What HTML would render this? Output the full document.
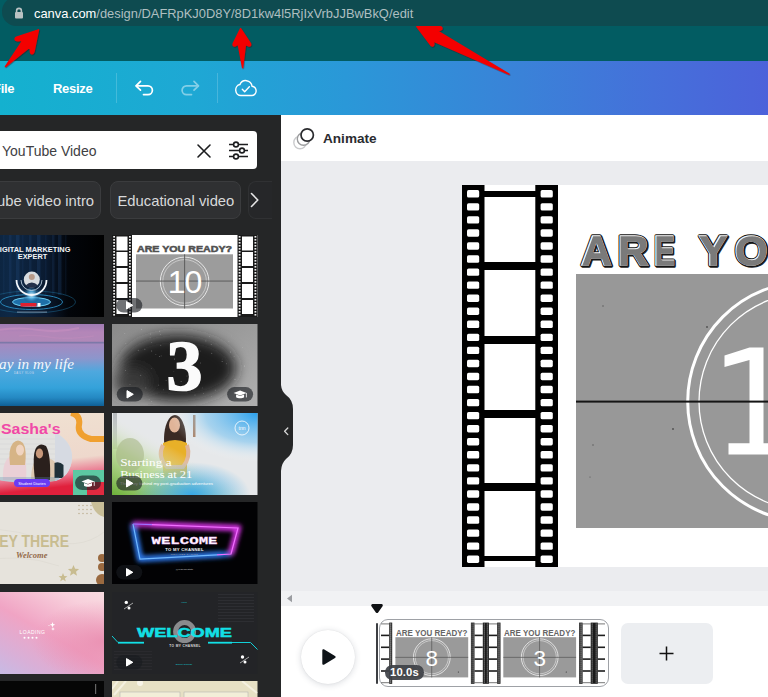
<!DOCTYPE html>
<html><head><meta charset="utf-8">
<style>
*{margin:0;padding:0;box-sizing:border-box}
html,body{width:768px;height:697px;overflow:hidden;background:#fff;font-family:"Liberation Sans",sans-serif}
.a{position:absolute}
#chrome{left:0;top:0;width:768px;height:61px;background:#025c62}
#pill{left:1.7px;top:-3px;width:800px;height:28.6px;border-radius:14.3px;background:#0e4b50}
#url{left:34px;top:5.8px;font-size:12.9px;color:#aebfc0;white-space:nowrap}
#url b{font-weight:normal;color:#fff}
#hdr{left:0;top:61px;width:768px;height:54px;background:linear-gradient(90deg,#14b1cf 0%,#1ea8d4 25%,#2a98d8 45%,#3a82d8 68%,#4570da 85%,#4c62da 100%)}
.hb{color:#fff;font-weight:bold;font-size:13px;letter-spacing:-0.3px;top:81px}
#left{left:0;top:115px;width:281px;height:582px;background:#252627}
#search{left:-10px;top:131px;width:267px;height:38px;background:#fff;border-radius:4px}
.chip{height:37.5px;top:181px;border-radius:8px;background:#2f3032;border:1px solid #3b3c3e;color:#d8d9da;font-size:14.8px;line-height:38px;white-space:nowrap;overflow:hidden}
.th{position:absolute;overflow:hidden;border-radius:2px}
#toolbar{left:281px;top:115px;width:487px;height:46px;background:#fff}
#canvasbg{left:281px;top:161px;width:487px;height:430px;background:#ebecef}
#page{left:462px;top:185px;width:320px;height:382px;background:#fff}
#tlbar{left:281px;top:591px;width:487px;height:15px;background:#f1f2f4}
#tl{left:281px;top:606px;width:487px;height:91px;background:#fff}
</style></head><body>
<div id="chrome" class="a"></div>
<div id="pill" class="a"></div>
<svg class="a" style="left:14px;top:7px" width="10" height="12" viewBox="0 0 10 12"><path d="M2.6 5.2V3.8a2.4 2.4 0 0 1 4.8 0V5.2" fill="none" stroke="#b9c2c3" stroke-width="1.6"/><rect x="1" y="5" width="8" height="6.5" rx="1" fill="#b9c2c3"/></svg>
<div id="url" class="a"><b>canva.com</b>/design/DAFRpKJ0D8Y/8D1kw4l5RjIxVrbJJBwBkQ/edit</div>
<div id="hdr" class="a"></div>
<div class="a hb" style="left:-7px">File</div>
<div class="a hb" style="left:53px">Resize</div>
<div class="a" style="left:116px;top:73px;width:1px;height:30px;background:rgba(255,255,255,.18)"></div>
<div class="a" style="left:217px;top:73px;width:1px;height:30px;background:rgba(255,255,255,.18)"></div>
<svg class="a" style="left:130px;top:75px" width="30" height="26" viewBox="0 0 30 26"><path d="M6.5 10.8H18a4.4 4.4 0 0 1 0 8.8h-4.5" fill="none" stroke="#fff" stroke-width="1.7" stroke-linecap="round"/><path d="M10.5 6.4 6 10.8l4.5 4.4" fill="none" stroke="#fff" stroke-width="1.7" stroke-linecap="round" stroke-linejoin="round"/></svg>
<svg class="a" style="left:175px;top:75px" width="30" height="26" viewBox="0 0 30 26" opacity=".45"><path d="M23 10.8H11.5a4.4 4.4 0 0 0 0 8.8h5" fill="none" stroke="#fff" stroke-width="1.7" stroke-linecap="round"/><path d="M19 6.4l4.5 4.4-4.5 4.4" fill="none" stroke="#fff" stroke-width="1.7" stroke-linecap="round" stroke-linejoin="round"/></svg>
<svg class="a" style="left:233px;top:76px" width="26" height="24" viewBox="0 0 28 24" preserveAspectRatio="none"><path d="M8.5 19.5h11.5a4.6 4.6 0 0 0 .6-9.2A7 7 0 0 0 7.4 8.6 5.5 5.5 0 0 0 8.5 19.5z" fill="none" stroke="#fff" stroke-width="1.5" stroke-linejoin="round"/><path d="M10 13.2l2.6 2.6 5-5" fill="none" stroke="#fff" stroke-width="1.5" stroke-linecap="round" stroke-linejoin="round"/></svg>
<div id="left" class="a"></div>
<!--TH-->
<svg class="a" style="left:-41.5px;top:234.7px" width="145.5" height="82" viewBox="0 0 145.5 82"><defs><linearGradient id="dm" x1="0" y1="0" x2="1" y2="0"><stop offset="0" stop-color="#081a2e"/><stop offset=".35" stop-color="#0e2846"/><stop offset=".6" stop-color="#0a1a30"/><stop offset=".75" stop-color="#02050a"/><stop offset="1" stop-color="#000"/></linearGradient><radialGradient id="dmg" cx=".5" cy=".5" r=".5"><stop offset="0" stop-color="#dff4ff"/><stop offset=".4" stop-color="#5ab6e8" stop-opacity=".8"/><stop offset="1" stop-color="#0a3a6a" stop-opacity="0"/></radialGradient></defs><rect width="145.5" height="82" fill="url(#dm)"/><rect x="44" y="0" width="1.5" height="60" fill="#2a5288" opacity="0.12"/><rect x="50" y="0" width="2.5" height="60" fill="#2a5288" opacity="0.18"/><rect x="57" y="0" width="3.5" height="60" fill="#2a5288" opacity="0.24"/><rect x="63" y="0" width="1.5" height="60" fill="#2a5288" opacity="0.12"/><rect x="70" y="0" width="2.5" height="60" fill="#2a5288" opacity="0.18"/><rect x="78" y="0" width="3.5" height="60" fill="#2a5288" opacity="0.24"/><rect x="86" y="0" width="1.5" height="60" fill="#2a5288" opacity="0.12"/><rect x="93" y="0" width="2.5" height="60" fill="#2a5288" opacity="0.18"/><rect x="99" y="0" width="3.5" height="60" fill="#2a5288" opacity="0.24"/><rect x="106" y="0" width="1.5" height="60" fill="#2a5288" opacity="0.12"/><ellipse cx="72.5" cy="67" rx="44" ry="11" fill="none" stroke="#1f6f9a" stroke-width=".7" opacity=".7"/><ellipse cx="72.5" cy="67" rx="31" ry="7.5" fill="none" stroke="#2a8fc4" stroke-width=".9"/><ellipse cx="72.5" cy="67" rx="19" ry="4.5" fill="#1e6fa8" stroke="#6ed0f4" stroke-width="1"/><ellipse cx="72.5" cy="60" rx="9" ry="9" fill="url(#dmg)"/><path d="M57.5 45a15 15 0 0 0 30 0" fill="none" stroke="#f2f6fa" stroke-width="1.8"/><path d="M62 45a10.5 10.5 0 0 0 21 0" fill="none" stroke="#c8dcec" stroke-width=".8"/><circle cx="72.8" cy="44.6" r="8" fill="#d8dce0"/><path d="M66.5 50.5q6.3-6 12.6 0q-2.6 2.2-6.3 2.2t-6.3-2.2z" fill="#23304a"/><circle cx="72.8" cy="42" r="3" fill="#b89a88"/><rect x="61.5" y="68" width="16" height="3.6" fill="#e02030"/><rect x="78.5" y="68" width="3" height="3.6" fill="#fff"/><text x="35.5" y="16.9" font-family="Liberation Sans" font-weight="bold" font-size="7.3" fill="#f4f6f8" textLength="76" lengthAdjust="spacingAndGlyphs">DIGITAL MARKETING</text><text x="58.8" y="24.1" font-family="Liberation Sans" font-weight="bold" font-size="7.3" fill="#f4f6f8" textLength="29.4" lengthAdjust="spacingAndGlyphs">EXPERT</text><rect x="58" y="76.5" width="30" height="1.2" fill="#8aa0b4" opacity=".7"/></svg>
<svg class="a" style="left:112.2px;top:234.7px" width="145.5" height="82" viewBox="0 0 145.5 82"><rect width="145.5" height="82" fill="#fff"/><rect x="0" y="0" width="20" height="82" fill="#1a1a1a"/><rect x="4.5" y="1.5" width="11" height="14" fill="#fff"/><rect x="4.5" y="17" width="11" height="14" fill="#fff"/><rect x="4.5" y="33" width="11" height="14" fill="#fff"/><rect x="4.5" y="49" width="11" height="14" fill="#fff"/><rect x="4.5" y="65" width="11" height="14" fill="#fff"/><rect x="1.2" y="1" width="1.8" height="1.6" fill="#eee"/><rect x="17" y="1" width="1.8" height="1.6" fill="#eee"/><rect x="1.2" y="4" width="1.8" height="1.6" fill="#eee"/><rect x="17" y="4" width="1.8" height="1.6" fill="#eee"/><rect x="1.2" y="7" width="1.8" height="1.6" fill="#eee"/><rect x="17" y="7" width="1.8" height="1.6" fill="#eee"/><rect x="1.2" y="10" width="1.8" height="1.6" fill="#eee"/><rect x="17" y="10" width="1.8" height="1.6" fill="#eee"/><rect x="1.2" y="13" width="1.8" height="1.6" fill="#eee"/><rect x="17" y="13" width="1.8" height="1.6" fill="#eee"/><rect x="1.2" y="16" width="1.8" height="1.6" fill="#eee"/><rect x="17" y="16" width="1.8" height="1.6" fill="#eee"/><rect x="1.2" y="19" width="1.8" height="1.6" fill="#eee"/><rect x="17" y="19" width="1.8" height="1.6" fill="#eee"/><rect x="1.2" y="22" width="1.8" height="1.6" fill="#eee"/><rect x="17" y="22" width="1.8" height="1.6" fill="#eee"/><rect x="1.2" y="25" width="1.8" height="1.6" fill="#eee"/><rect x="17" y="25" width="1.8" height="1.6" fill="#eee"/><rect x="1.2" y="28" width="1.8" height="1.6" fill="#eee"/><rect x="17" y="28" width="1.8" height="1.6" fill="#eee"/><rect x="1.2" y="31" width="1.8" height="1.6" fill="#eee"/><rect x="17" y="31" width="1.8" height="1.6" fill="#eee"/><rect x="1.2" y="34" width="1.8" height="1.6" fill="#eee"/><rect x="17" y="34" width="1.8" height="1.6" fill="#eee"/><rect x="1.2" y="37" width="1.8" height="1.6" fill="#eee"/><rect x="17" y="37" width="1.8" height="1.6" fill="#eee"/><rect x="1.2" y="40" width="1.8" height="1.6" fill="#eee"/><rect x="17" y="40" width="1.8" height="1.6" fill="#eee"/><rect x="1.2" y="43" width="1.8" height="1.6" fill="#eee"/><rect x="17" y="43" width="1.8" height="1.6" fill="#eee"/><rect x="1.2" y="46" width="1.8" height="1.6" fill="#eee"/><rect x="17" y="46" width="1.8" height="1.6" fill="#eee"/><rect x="1.2" y="49" width="1.8" height="1.6" fill="#eee"/><rect x="17" y="49" width="1.8" height="1.6" fill="#eee"/><rect x="1.2" y="52" width="1.8" height="1.6" fill="#eee"/><rect x="17" y="52" width="1.8" height="1.6" fill="#eee"/><rect x="1.2" y="55" width="1.8" height="1.6" fill="#eee"/><rect x="17" y="55" width="1.8" height="1.6" fill="#eee"/><rect x="1.2" y="58" width="1.8" height="1.6" fill="#eee"/><rect x="17" y="58" width="1.8" height="1.6" fill="#eee"/><rect x="1.2" y="61" width="1.8" height="1.6" fill="#eee"/><rect x="17" y="61" width="1.8" height="1.6" fill="#eee"/><rect x="1.2" y="64" width="1.8" height="1.6" fill="#eee"/><rect x="17" y="64" width="1.8" height="1.6" fill="#eee"/><rect x="1.2" y="67" width="1.8" height="1.6" fill="#eee"/><rect x="17" y="67" width="1.8" height="1.6" fill="#eee"/><rect x="1.2" y="70" width="1.8" height="1.6" fill="#eee"/><rect x="17" y="70" width="1.8" height="1.6" fill="#eee"/><rect x="1.2" y="73" width="1.8" height="1.6" fill="#eee"/><rect x="17" y="73" width="1.8" height="1.6" fill="#eee"/><rect x="1.2" y="76" width="1.8" height="1.6" fill="#eee"/><rect x="17" y="76" width="1.8" height="1.6" fill="#eee"/><rect x="1.2" y="79" width="1.8" height="1.6" fill="#eee"/><rect x="17" y="79" width="1.8" height="1.6" fill="#eee"/><rect x="125.5" y="0" width="20" height="82" fill="#1a1a1a"/><rect x="130.0" y="1.5" width="11" height="14" fill="#fff"/><rect x="130.0" y="17" width="11" height="14" fill="#fff"/><rect x="130.0" y="33" width="11" height="14" fill="#fff"/><rect x="130.0" y="49" width="11" height="14" fill="#fff"/><rect x="130.0" y="65" width="11" height="14" fill="#fff"/><rect x="126.7" y="1" width="1.8" height="1.6" fill="#eee"/><rect x="142.5" y="1" width="1.8" height="1.6" fill="#eee"/><rect x="126.7" y="4" width="1.8" height="1.6" fill="#eee"/><rect x="142.5" y="4" width="1.8" height="1.6" fill="#eee"/><rect x="126.7" y="7" width="1.8" height="1.6" fill="#eee"/><rect x="142.5" y="7" width="1.8" height="1.6" fill="#eee"/><rect x="126.7" y="10" width="1.8" height="1.6" fill="#eee"/><rect x="142.5" y="10" width="1.8" height="1.6" fill="#eee"/><rect x="126.7" y="13" width="1.8" height="1.6" fill="#eee"/><rect x="142.5" y="13" width="1.8" height="1.6" fill="#eee"/><rect x="126.7" y="16" width="1.8" height="1.6" fill="#eee"/><rect x="142.5" y="16" width="1.8" height="1.6" fill="#eee"/><rect x="126.7" y="19" width="1.8" height="1.6" fill="#eee"/><rect x="142.5" y="19" width="1.8" height="1.6" fill="#eee"/><rect x="126.7" y="22" width="1.8" height="1.6" fill="#eee"/><rect x="142.5" y="22" width="1.8" height="1.6" fill="#eee"/><rect x="126.7" y="25" width="1.8" height="1.6" fill="#eee"/><rect x="142.5" y="25" width="1.8" height="1.6" fill="#eee"/><rect x="126.7" y="28" width="1.8" height="1.6" fill="#eee"/><rect x="142.5" y="28" width="1.8" height="1.6" fill="#eee"/><rect x="126.7" y="31" width="1.8" height="1.6" fill="#eee"/><rect x="142.5" y="31" width="1.8" height="1.6" fill="#eee"/><rect x="126.7" y="34" width="1.8" height="1.6" fill="#eee"/><rect x="142.5" y="34" width="1.8" height="1.6" fill="#eee"/><rect x="126.7" y="37" width="1.8" height="1.6" fill="#eee"/><rect x="142.5" y="37" width="1.8" height="1.6" fill="#eee"/><rect x="126.7" y="40" width="1.8" height="1.6" fill="#eee"/><rect x="142.5" y="40" width="1.8" height="1.6" fill="#eee"/><rect x="126.7" y="43" width="1.8" height="1.6" fill="#eee"/><rect x="142.5" y="43" width="1.8" height="1.6" fill="#eee"/><rect x="126.7" y="46" width="1.8" height="1.6" fill="#eee"/><rect x="142.5" y="46" width="1.8" height="1.6" fill="#eee"/><rect x="126.7" y="49" width="1.8" height="1.6" fill="#eee"/><rect x="142.5" y="49" width="1.8" height="1.6" fill="#eee"/><rect x="126.7" y="52" width="1.8" height="1.6" fill="#eee"/><rect x="142.5" y="52" width="1.8" height="1.6" fill="#eee"/><rect x="126.7" y="55" width="1.8" height="1.6" fill="#eee"/><rect x="142.5" y="55" width="1.8" height="1.6" fill="#eee"/><rect x="126.7" y="58" width="1.8" height="1.6" fill="#eee"/><rect x="142.5" y="58" width="1.8" height="1.6" fill="#eee"/><rect x="126.7" y="61" width="1.8" height="1.6" fill="#eee"/><rect x="142.5" y="61" width="1.8" height="1.6" fill="#eee"/><rect x="126.7" y="64" width="1.8" height="1.6" fill="#eee"/><rect x="142.5" y="64" width="1.8" height="1.6" fill="#eee"/><rect x="126.7" y="67" width="1.8" height="1.6" fill="#eee"/><rect x="142.5" y="67" width="1.8" height="1.6" fill="#eee"/><rect x="126.7" y="70" width="1.8" height="1.6" fill="#eee"/><rect x="142.5" y="70" width="1.8" height="1.6" fill="#eee"/><rect x="126.7" y="73" width="1.8" height="1.6" fill="#eee"/><rect x="142.5" y="73" width="1.8" height="1.6" fill="#eee"/><rect x="126.7" y="76" width="1.8" height="1.6" fill="#eee"/><rect x="142.5" y="76" width="1.8" height="1.6" fill="#eee"/><rect x="126.7" y="79" width="1.8" height="1.6" fill="#eee"/><rect x="142.5" y="79" width="1.8" height="1.6" fill="#eee"/><text x="72.5" y="17.4" text-anchor="middle" font-family="Liberation Sans" font-weight="bold" font-size="9.3" fill="#505050" stroke="#505050" stroke-width=".5" textLength="95" lengthAdjust="spacingAndGlyphs">ARE YOU READY?</text><rect x="24" y="19.3" width="97" height="54.2" fill="#9c9c9c"/><circle cx="72.6" cy="46.4" r="24.3" fill="none" stroke="#e6e6e6" stroke-width="1"/><circle cx="72.6" cy="46.4" r="21.8" fill="none" stroke="#e6e6e6" stroke-width=".6"/><rect x="24" y="45.6" width="97" height=".9" fill="#555"/><rect x="72.2" y="19.3" width=".9" height="54.2" fill="#555"/><text x="72.6" y="58.2" text-anchor="middle" font-family="Liberation Sans" font-size="32" fill="#fff" letter-spacing="-1">10</text><rect x="4.3" y="63" width="26" height="14.6" rx="7.3" fill="rgba(25,28,32,.62)"/><path d="M14.5 66.6v7.4l6.3-3.7z" fill="#fff" stroke="#fff" stroke-width="1" stroke-linejoin="round"/></svg>
<svg class="a" style="left:-41.5px;top:323.9px" width="145.5" height="82" viewBox="0 0 145.5 82"><defs><linearGradient id="dl" x1="0" y1="0" x2="0" y2="1"><stop offset="0" stop-color="#a07cb4"/><stop offset=".1" stop-color="#b486b8"/><stop offset=".21" stop-color="#b088b8"/><stop offset=".225" stop-color="#7c78a8"/><stop offset=".25" stop-color="#a48ac0"/><stop offset=".42" stop-color="#8c96cc"/><stop offset=".58" stop-color="#4ea8de"/><stop offset=".78" stop-color="#34a2da"/><stop offset=".9" stop-color="#2488c2"/><stop offset="1" stop-color="#0f5f95"/></linearGradient></defs><rect width="145.5" height="82" fill="url(#dl)"/><path d="M40 6q20-3 40 0t40-2" stroke="#c890c0" stroke-width="2" fill="none" opacity=".6"/><path d="M60 12q15-2 30 1t45-1" stroke="#c08cbc" stroke-width="1.5" fill="none" opacity=".5"/><text x="40" y="45" font-family="Liberation Serif" font-style="italic" font-size="14.5" fill="#f4f8fc" textLength="75" lengthAdjust="spacingAndGlyphs">ay in my life</text><text x="55" y="50" font-family="Liberation Sans" font-size="2.6" fill="#dde" letter-spacing=".5">DAILY VLOG</text></svg>
<svg class="a" style="left:112.2px;top:323.9px" width="145.5" height="82" viewBox="0 0 145.5 82"><defs><filter id="thb" x="-30%" y="-30%" width="160%" height="160%"><feGaussianBlur stdDeviation="7"/></filter><linearGradient id="thg" x1="0" y1="0" x2="1" y2="1"><stop offset="0" stop-color="#8a8a8a"/><stop offset=".5" stop-color="#9c9c9c"/><stop offset="1" stop-color="#b0b0b0"/></linearGradient></defs><rect width="145.5" height="82" fill="url(#thg)"/><g filter="url(#thb)"><ellipse cx="66" cy="44" rx="58" ry="33" fill="#1e1e1e"/><ellipse cx="20" cy="58" rx="18" ry="14" fill="#3a3a3a"/></g><circle cx="39.7" cy="44.7" r="0.31" fill="#ddd" opacity=".6"/><circle cx="85.5" cy="50.7" r="0.22" fill="#ddd" opacity=".6"/><circle cx="11.6" cy="66.1" r="0.28" fill="#ddd" opacity=".6"/><circle cx="39.3" cy="77.7" r="0.34" fill="#ddd" opacity=".6"/><circle cx="114.6" cy="39.8" r="0.39" fill="#ddd" opacity=".6"/><circle cx="28.8" cy="51.3" r="0.46" fill="#ddd" opacity=".6"/><circle cx="75.4" cy="59.1" r="0.40" fill="#ddd" opacity=".6"/><circle cx="18.0" cy="60.4" r="0.38" fill="#ddd" opacity=".6"/><circle cx="47.7" cy="7.3" r="0.46" fill="#ddd" opacity=".6"/><circle cx="69.1" cy="57.5" r="0.46" fill="#ddd" opacity=".6"/><circle cx="99.3" cy="72.2" r="0.32" fill="#ddd" opacity=".6"/><circle cx="110.1" cy="37.5" r="0.48" fill="#ddd" opacity=".6"/><circle cx="119.9" cy="12.1" r="0.24" fill="#ddd" opacity=".6"/><circle cx="37.1" cy="75.5" r="0.33" fill="#ddd" opacity=".6"/><circle cx="88.3" cy="27.0" r="0.35" fill="#ddd" opacity=".6"/><circle cx="58.2" cy="30.6" r="0.38" fill="#ddd" opacity=".6"/><circle cx="83.0" cy="71.0" r="0.40" fill="#ddd" opacity=".6"/><circle cx="126.1" cy="67.5" r="0.50" fill="#ddd" opacity=".6"/><circle cx="93.9" cy="16.9" r="0.46" fill="#ddd" opacity=".6"/><circle cx="130.6" cy="71.0" r="0.37" fill="#ddd" opacity=".6"/><circle cx="99.2" cy="20.4" r="0.45" fill="#ddd" opacity=".6"/><circle cx="81.7" cy="25.8" r="0.22" fill="#ddd" opacity=".6"/><circle cx="116.7" cy="77.3" r="0.23" fill="#ddd" opacity=".6"/><circle cx="110.1" cy="35.0" r="0.25" fill="#ddd" opacity=".6"/><circle cx="46.7" cy="61.1" r="0.46" fill="#ddd" opacity=".6"/><circle cx="15.5" cy="49.9" r="0.21" fill="#ddd" opacity=".6"/><circle cx="99.8" cy="29.2" r="0.46" fill="#ddd" opacity=".6"/><circle cx="132.6" cy="41.9" r="0.50" fill="#ddd" opacity=".6"/><circle cx="48.7" cy="10.6" r="0.38" fill="#ddd" opacity=".6"/><circle cx="13.9" cy="19.4" r="0.32" fill="#ddd" opacity=".6"/><circle cx="86.3" cy="16.4" r="0.21" fill="#ddd" opacity=".6"/><circle cx="118.5" cy="27.9" r="0.49" fill="#ddd" opacity=".6"/><circle cx="122.1" cy="32.6" r="0.34" fill="#ddd" opacity=".6"/><circle cx="75.0" cy="52.0" r="0.38" fill="#ddd" opacity=".6"/><circle cx="79.9" cy="50.3" r="0.48" fill="#ddd" opacity=".6"/><circle cx="73.4" cy="36.5" r="0.42" fill="#ddd" opacity=".6"/><circle cx="39.7" cy="27.0" r="0.49" fill="#ddd" opacity=".6"/><circle cx="75.1" cy="45.0" r="0.20" fill="#ddd" opacity=".6"/><circle cx="61.9" cy="47.3" r="0.21" fill="#ddd" opacity=".6"/><circle cx="87.0" cy="51.1" r="0.22" fill="#ddd" opacity=".6"/><circle cx="88.4" cy="39.0" r="0.40" fill="#ddd" opacity=".6"/><circle cx="54.1" cy="56.6" r="0.42" fill="#ddd" opacity=".6"/><circle cx="12.8" cy="9.4" r="0.40" fill="#ddd" opacity=".6"/><circle cx="130.4" cy="23.3" r="0.34" fill="#ddd" opacity=".6"/><circle cx="84.1" cy="28.4" r="0.31" fill="#ddd" opacity=".6"/><circle cx="49.1" cy="31.9" r="0.38" fill="#ddd" opacity=".6"/><circle cx="47.6" cy="32.5" r="0.43" fill="#ddd" opacity=".6"/><circle cx="13.4" cy="46.6" r="0.42" fill="#ddd" opacity=".6"/><circle cx="48.8" cy="21.2" r="0.44" fill="#ddd" opacity=".6"/><circle cx="39.8" cy="18.7" r="0.33" fill="#ddd" opacity=".6"/><circle cx="97.3" cy="12.4" r="0.30" fill="#ddd" opacity=".6"/><circle cx="51.7" cy="65.8" r="0.33" fill="#ddd" opacity=".6"/><circle cx="116.9" cy="17.4" r="0.30" fill="#ddd" opacity=".6"/><circle cx="91.3" cy="69.6" r="0.34" fill="#ddd" opacity=".6"/><circle cx="38.1" cy="13.8" r="0.36" fill="#ddd" opacity=".6"/><circle cx="33.9" cy="63.9" r="0.45" fill="#ddd" opacity=".6"/><circle cx="32.9" cy="25.3" r="0.44" fill="#ddd" opacity=".6"/><circle cx="90.2" cy="63.9" r="0.30" fill="#ddd" opacity=".6"/><circle cx="26.2" cy="26.3" r="0.44" fill="#ddd" opacity=".6"/><circle cx="43.9" cy="30.3" r="0.33" fill="#ddd" opacity=".6"/><circle cx="62.5" cy="34.9" r="0.48" fill="#ddd" opacity=".6"/><circle cx="29.5" cy="5.3" r="0.48" fill="#ddd" opacity=".6"/><circle cx="120.0" cy="77.0" r="0.33" fill="#ddd" opacity=".6"/><circle cx="128.8" cy="72.7" r="0.27" fill="#ddd" opacity=".6"/><circle cx="103.2" cy="66.1" r="0.40" fill="#ddd" opacity=".6"/><circle cx="74.9" cy="26.1" r="0.30" fill="#ddd" opacity=".6"/><circle cx="38.4" cy="10.0" r="0.38" fill="#ddd" opacity=".6"/><circle cx="45.9" cy="64.1" r="0.21" fill="#ddd" opacity=".6"/><circle cx="123.0" cy="55.6" r="0.48" fill="#ddd" opacity=".6"/><circle cx="122.1" cy="70.7" r="0.37" fill="#ddd" opacity=".6"/><text x="72.5" y="65.6" text-anchor="middle" font-family="Liberation Serif" font-weight="bold" font-size="72" fill="#fbfbfb" stroke="#fbfbfb" stroke-width="1.6">3</text><rect x="4.8" y="63" width="26" height="14.6" rx="7.3" fill="rgba(25,28,32,.62)"/><path d="M15.0 66.6v7.4l6.3-3.7z" fill="#fff" stroke="#fff" stroke-width="1" stroke-linejoin="round"/><rect x="115.1" y="63" width="26" height="14.6" rx="7.3" fill="rgba(25,28,32,.62)"/><path d="M121.6 69l6.5-2.6 6.5 2.6-6.5 2.6z" fill="#fff"/><path d="M124.1 70.5v2.8c2 1.4 6 1.4 8 0v-2.8l-4 1.6z" fill="#fff"/><rect x="133.9" y="69" width=".8" height="4.4" fill="#fff"/></svg>
<svg class="a" style="left:-41.5px;top:413.1px" width="145.5" height="82" viewBox="0 0 145.5 82"><defs><linearGradient id="sg" x1="0" y1="0" x2=".2" y2="1"><stop offset="0" stop-color="#f0e2d2"/><stop offset=".68" stop-color="#eed8cc"/><stop offset=".86" stop-color="#ea7890"/><stop offset="1" stop-color="#e0203c"/></linearGradient><clipPath id="sc"><path d="M30 20.5H98Q114 30 113 46Q111 64 96 68Q70 72 45 68Q30 66 30 50Z"/></clipPath></defs><rect width="145.5" height="82" fill="url(#sg)"/><path d="M112 0q10 2 8 12t12 14h14" fill="none" stroke="#f0a030" stroke-width="6"/><g clip-path="url(#sc)"><rect x="30" y="18" width="85" height="56" fill="#e2e2e0"/><path d="M30 26h70M30 31h70M30 36h70M30 41h70M30 46h70M30 51h70" stroke="#d0d0ce" stroke-width=".4"/><rect x="96" y="18" width="20" height="56" fill="#d6dae2"/><path d="M44 67q-1-20 8-24q10-3 14 2q2 10 1 22z" fill="#ead0d6"/><path d="M51 52q-2-16 3-22q5-5 10 0q4 6 2 22z" fill="#d6b486"/><ellipse cx="61" cy="37" rx="4" ry="5.5" fill="#f0d4c0"/><path d="M72 68q0-20 8-23q10-2 16 4q2 10 0 19z" fill="#dcc8b0"/><path d="M76 67q-3-25 1-32q4-6 10-2q5 8 4 34z" fill="#2a201c"/><ellipse cx="80.5" cy="40.5" rx="3.6" ry="5" fill="#c8987a"/><path d="M95.5 50q5-2 9 2v13h-9z" fill="#1e3038"/><rect x="40" y="64" width="60" height="6" fill="#5a90b0" opacity=".3"/></g><text x="42" y="21.3" font-family="Liberation Sans" font-weight="bold" font-size="14" fill="#f048a8" textLength="59.5" lengthAdjust="spacingAndGlyphs">Sasha's</text><rect x="55" y="66" width="36" height="8" rx="4" fill="#6a3cf4"/><text x="73" y="71.5" text-anchor="middle" font-family="Liberation Sans" font-size="4" fill="#fff">Student Diaries</text><rect x="114" y="57" width="31.5" height="25" fill="#5cc8a2"/><rect x="128" y="69" width="17.5" height="13" fill="#e02a40"/><rect x="116" y="62.5" width="26" height="14.6" rx="7.3" fill="rgba(25,28,32,.62)"/><path d="M122.5 68.5l6.5-2.6 6.5 2.6-6.5 2.6z" fill="#fff"/><path d="M125 70.0v2.8c2 1.4 6 1.4 8 0v-2.8l-4 1.6z" fill="#fff"/><rect x="134.8" y="68.5" width=".8" height="4.4" fill="#fff"/></svg>
<svg class="a" style="left:112.2px;top:413.1px" width="145.5" height="82" viewBox="0 0 145.5 82"><defs><linearGradient id="bg1" x1="0" y1="1" x2="1" y2="0"><stop offset="0" stop-color="#6cb038"/><stop offset=".3" stop-color="#b8d890" stop-opacity=".8"/><stop offset=".5" stop-color="#eaeaea" stop-opacity="0"/></linearGradient><radialGradient id="bg2" cx="1" cy="0" r=".6"><stop offset="0" stop-color="#2aa0ec"/><stop offset=".6" stop-color="#7cc4f0" stop-opacity=".6"/><stop offset="1" stop-color="#fff" stop-opacity="0"/></radialGradient><radialGradient id="bg3" cx=".55" cy="1" r=".4"><stop offset="0" stop-color="#38a8e8"/><stop offset="1" stop-color="#38a8e8" stop-opacity="0"/></radialGradient></defs><rect width="145.5" height="82" fill="#e6e8ea"/><rect x="1" y="0" width="4" height="36" fill="#b8bcc0"/><ellipse cx="63" cy="26" rx="11" ry="24" fill="#3a2a24"/><ellipse cx="62.5" cy="12" rx="5.5" ry="7.5" fill="#e0b498"/><path d="M51 30q12-6 24 0v34H51z" fill="#e8b028"/><path d="M51 32q-6 12 4 22h16q8-10 4-22" stroke="#e0b498" stroke-width="4" fill="none"/><rect x="81" y="2" width="2.5" height="22" fill="#a07050"/><rect width="145.5" height="82" fill="url(#bg1)"/><rect width="145.5" height="82" fill="url(#bg2)"/><rect width="145.5" height="82" fill="url(#bg3)"/><ellipse cx="18" cy="42" rx="14" ry="17" fill="#a8b888" opacity=".6"/><circle cx="130" cy="15" r="7" fill="none" stroke="#fff" stroke-width=".8"/><text x="130" y="16.8" text-anchor="middle" font-family="Liberation Sans" font-size="5" fill="#fff">tnn</text><text x="8.2" y="53" font-family="Liberation Serif" font-size="11.2" fill="#fff" textLength="51.4" lengthAdjust="spacingAndGlyphs">Starting a</text><text x="8.2" y="65" font-family="Liberation Serif" font-size="11.2" fill="#fff" textLength="72" lengthAdjust="spacingAndGlyphs">Business at 21</text><text x="8" y="72.4" font-family="Liberation Sans" font-size="3.6" fill="#fff" textLength="93" lengthAdjust="spacingAndGlyphs">The story behind my post-graduation adventures</text><rect x="4.3" y="63" width="26" height="14.6" rx="7.3" fill="rgba(25,28,32,.62)"/><path d="M14.5 66.6v7.4l6.3-3.7z" fill="#fff" stroke="#fff" stroke-width="1" stroke-linejoin="round"/></svg>
<svg class="a" style="left:-41.5px;top:502.3px" width="145.5" height="82" viewBox="0 0 145.5 82"><rect width="145.5" height="82" fill="#e6e3dc"/><path d="M0 30Q40 22 80 36T145 30" stroke="#dcd8d0" stroke-width="1" fill="none" opacity=".6"/><path d="M20 60Q60 50 100 64" stroke="#dcd8d0" stroke-width="1" fill="none" opacity=".6"/><path d="M132 0h13.5v15q-10-2-13.5-15z" fill="#c8be98"/><circle cx="120" cy="3.5" r=".7" fill="#b8a888"/><circle cx="124" cy="3.5" r=".7" fill="#b8a888"/><circle cx="128" cy="3.5" r=".7" fill="#b8a888"/><circle cx="132" cy="3.5" r=".7" fill="#b8a888"/><circle cx="120" cy="7.5" r=".7" fill="#b8a888"/><circle cx="124" cy="7.5" r=".7" fill="#b8a888"/><circle cx="128" cy="7.5" r=".7" fill="#b8a888"/><circle cx="132" cy="7.5" r=".7" fill="#b8a888"/><circle cx="120" cy="11.5" r=".7" fill="#b8a888"/><circle cx="124" cy="11.5" r=".7" fill="#b8a888"/><circle cx="128" cy="11.5" r=".7" fill="#b8a888"/><circle cx="132" cy="11.5" r=".7" fill="#b8a888"/><circle cx="143" cy="56" r="4" fill="#9a6a40"/><circle cx="143" cy="65" r="4" fill="#9a6a40"/><circle cx="143" cy="78" r="6" fill="#9a6a40"/><path d="M104 71l1.2 3 3.2.2-2.5 2 .9 3.2-2.8-1.8-2.8 1.8.9-3.2-2.5-2 3.2-.2z" fill="#c8bc90"/><path d="M114.5 63l1.6 3.8 4 .3-3.1 2.6 1 4-3.5-2.2-3.5 2.2 1-4-3.1-2.6 4-.3z" fill="#c8bc90"/><text x="30" y="44.6" font-family="Liberation Sans" font-weight="bold" font-size="16" fill="#c8bc90" textLength="80" lengthAdjust="spacingAndGlyphs">HEY THERE</text><text x="57" y="55.5" font-family="Liberation Serif" font-style="italic" font-weight="bold" font-size="8.5" fill="#946a4a">Welcome</text></svg>
<svg class="a" style="left:112.2px;top:502.3px" width="145.5" height="82" viewBox="0 0 145.5 82"><defs><linearGradient id="nb" x1="0" y1="0" x2="1" y2="0"><stop offset="0" stop-color="#2a8aff"/><stop offset=".45" stop-color="#8a40f0"/><stop offset="1" stop-color="#e030f0"/></linearGradient><filter id="gl" x="-30%" y="-60%" width="160%" height="220%"><feGaussianBlur stdDeviation="2.8"/></filter></defs><rect width="145.5" height="82" fill="#020204"/><g filter="url(#gl)"><path d="M119 52L28 57L21 22" fill="none" stroke="#2a7cff" stroke-width="5"/><path d="M21 22L126 26L119 52" fill="none" stroke="#e030f0" stroke-width="5"/></g><g filter="url(#gl)" opacity=".6"><path d="M110 52.5L28 57L21 22" fill="none" stroke="#3a90ff" stroke-width="3"/><path d="M40 22.7L126 26L119 52" fill="none" stroke="#f040ff" stroke-width="3"/></g><path d="M105 52.8L28 57L21 22" fill="none" stroke="#70b8ff" stroke-width="1.2"/><path d="M40 22.7L126 26L119 52L105 52.8" fill="none" stroke="#f070ff" stroke-width="1.2"/><path d="M21 22L40 22.7" stroke="#a070ff" stroke-width="1.2"/><text x="72.5" y="41.5" text-anchor="middle" font-family="Liberation Mono" font-weight="bold" font-size="11" fill="#fff" textLength="66" lengthAdjust="spacingAndGlyphs" stroke="#f8c0ff" stroke-width=".3">WELCOME</text><text x="72.5" y="48.5" text-anchor="middle" font-family="Liberation Sans" font-weight="bold" font-size="4.2" fill="#fff" letter-spacing=".3">TO MY CHANNEL</text><text x="72.5" y="53" text-anchor="middle" font-family="Liberation Sans" font-size="2.3" fill="#aaa" letter-spacing=".4">MOHAMED GAMING</text><text x="72.5" y="68" text-anchor="middle" font-family="Liberation Sans" font-size="2.4" fill="#ccc">@reallygreatsite</text><rect x="4.3" y="63" width="26" height="14.6" rx="7.3" fill="rgba(25,28,32,.62)"/><path d="M14.5 66.6v7.4l6.3-3.7z" fill="#fff" stroke="#fff" stroke-width="1" stroke-linejoin="round"/></svg>
<svg class="a" style="left:-41.5px;top:591.5px" width="145.5" height="82" viewBox="0 0 145.5 82"><defs><linearGradient id="lg" x1="0" y1="1" x2="1" y2="0"><stop offset="0" stop-color="#b8c4f0"/><stop offset=".3" stop-color="#d8b0d8"/><stop offset=".55" stop-color="#f0a4c4"/><stop offset=".85" stop-color="#f8d0dc"/><stop offset="1" stop-color="#f8dce0"/></linearGradient><radialGradient id="lg2" cx="1" cy=".6" r=".5"><stop offset="0" stop-color="#e888ac" stop-opacity=".8"/><stop offset="1" stop-color="#e888ac" stop-opacity="0"/></radialGradient></defs><rect width="145.5" height="82" fill="url(#lg)"/><rect width="145.5" height="82" fill="url(#lg2)"/><text x="60.5" y="42" font-family="Liberation Sans" font-size="5" fill="#fff" letter-spacing=".5">LOADING</text><circle cx="65.5" cy="45.8" r="1" fill="#fff"/><circle cx="69.5" cy="45.8" r="1" fill="#fff"/><circle cx="73.5" cy="45.8" r="1" fill="#fff"/><circle cx="77.5" cy="45.8" r="1" fill="#fff"/><path d="M93.5 30l.7 2 2 .7-2 .7-.7 2-.7-2-2-.7 2-.7z M94 35l.5 1.4 1.4.5-1.4.5-.5 1.4-.5-1.4-1.4-.5 1.4-.5z" fill="#fff"/><circle cx="90" cy="33.5" r=".5" fill="#fff"/></svg>
<svg class="a" style="left:112.2px;top:591.5px" width="145.5" height="82" viewBox="0 0 145.5 82"><rect width="145.5" height="82" fill="#232427"/><rect x="106" y="2" width="36" height=".6" fill="#3a3b3e" opacity=".8"/><rect x="106" y="5" width="36" height=".6" fill="#3a3b3e" opacity=".8"/><rect x="106" y="8" width="36" height=".6" fill="#3a3b3e" opacity=".8"/><rect x="106" y="11" width="36" height=".6" fill="#3a3b3e" opacity=".8"/><rect x="106" y="14" width="36" height=".6" fill="#3a3b3e" opacity=".8"/><rect x="106" y="17" width="36" height=".6" fill="#3a3b3e" opacity=".8"/><rect x="106" y="20" width="36" height=".6" fill="#3a3b3e" opacity=".8"/><rect x="106" y="23" width="36" height=".6" fill="#3a3b3e" opacity=".8"/><rect x="106" y="26" width="36" height=".6" fill="#3a3b3e" opacity=".8"/><rect x="106" y="29" width="36" height=".6" fill="#3a3b3e" opacity=".8"/><rect x="2" y="59" width="38" height=".5" fill="#35363a" opacity=".8"/><rect x="2" y="62" width="38" height=".5" fill="#35363a" opacity=".8"/><rect x="2" y="65" width="38" height=".5" fill="#35363a" opacity=".8"/><rect x="2" y="68" width="38" height=".5" fill="#35363a" opacity=".8"/><rect x="2" y="71" width="38" height=".5" fill="#35363a" opacity=".8"/><rect x="2" y="74" width="38" height=".5" fill="#35363a" opacity=".8"/><rect x="2" y="77" width="38" height=".5" fill="#35363a" opacity=".8"/><circle cx="72.6" cy="39.6" r="9" fill="none" stroke="#8a8b8d" stroke-width="5"/><text x="72.5" y="44.6" text-anchor="middle" font-family="Liberation Sans" font-weight="bold" font-size="12.5" fill="#12e0e6" textLength="95" lengthAdjust="spacingAndGlyphs" stroke="#12e0e6" stroke-width=".5">WELCOME</text><path d="M0 44l6 6.5h26" fill="none" stroke="#12d0d8" stroke-width="1"/><rect x="6" y="49.8" width="26" height="1.8" fill="#12e0e6"/><path d="M145.5 57.5l-7-7H117" fill="none" stroke="#12d0d8" stroke-width="1"/><rect x="96" y="49.8" width="24" height="1.8" fill="#12e0e6"/><text x="73" y="54.5" text-anchor="middle" font-family="Liberation Sans" font-weight="bold" font-size="3.2" fill="#ddd" letter-spacing=".4">TO MY CHANNEL</text><text x="72" y="10.5" text-anchor="middle" font-family="Liberation Sans" font-size="2.5" fill="#12d0d8">Hello</text><text x="72" y="73" text-anchor="middle" font-family="Liberation Sans" font-size="2.5" fill="#12d0d8">Daniel Gallego</text><circle cx="14.3" cy="10.4" r="1.7" fill="#fff"/><circle cx="17" cy="16" r="1.5" fill="#fff"/><path d="M12 17l9-6" stroke="#fff" stroke-width=".6"/><circle cx="130.5" cy="65" r="1.7" fill="#fff"/><circle cx="133" cy="70" r="1.5" fill="#fff"/><path d="M128 71l9-6" stroke="#fff" stroke-width=".6"/><rect x="4.3" y="63" width="26" height="14.6" rx="7.3" fill="rgba(25,28,32,.62)"/><path d="M14.5 66.6v7.4l6.3-3.7z" fill="#fff" stroke="#fff" stroke-width="1" stroke-linejoin="round"/></svg>
<svg class="a" style="left:-41.5px;top:680.7px" width="145.5" height="82" viewBox="0 0 145.5 82"><rect width="145.5" height="82" fill="#060606"/><rect x="136" y="3" width="1.2" height="10" fill="#666"/></svg>
<svg class="a" style="left:112.2px;top:680.7px" width="145.5" height="82" viewBox="0 0 145.5 82"><rect width="145.5" height="82" fill="#e6e0c4"/><path d="M6 0l-6 8M14 0L2 14M130 0l15 12" stroke="#f4f0e0" stroke-width="2"/><circle cx="28" cy="2" r="3" fill="#f8f4e8"/><rect x="8" y="11" width="60" height="10" fill="#f2eed8" stroke="#aaa" stroke-width=".5"/><rect x="72" y="11" width="64" height="10" fill="#f2eed8" stroke="#aaa" stroke-width=".5"/></svg>
<!--/TH-->
<div id="search" class="a"></div>
<div class="a" style="left:2px;top:142.5px;font-size:14px;color:#3e4043;white-space:nowrap">YouTube Video</div>
<svg class="a" style="left:196px;top:143px" width="16" height="16" viewBox="0 0 16 16"><path d="M2 2l12 12M14 2 2 14" stroke="#1c1d1f" stroke-width="1.6" stroke-linecap="round"/></svg>
<svg class="a" style="left:227px;top:140px" width="23" height="21" viewBox="0 0 23 21"><g fill="none" stroke="#1c1d1f" stroke-width="1.6"><path d="M2 4.5h4.5M11.5 4.5H21M2 10.5h10.5M17.5 10.5H21M2 16.5h4.5M11.5 16.5H21"/><circle cx="9" cy="4.5" r="2.4"/><circle cx="15" cy="10.5" r="2.4"/><circle cx="9" cy="16.5" r="2.4"/></g></svg>
<div class="a chip" style="left:-20px;width:121px;padding-left:16px">ube video intro</div>
<div class="a chip" style="left:109.5px;width:131px;padding-left:7px">Educational video</div>
<div class="a chip" style="left:248px;width:24px;background:#262729;border-color:#303133;border-right:none;border-radius:8px 0 0 8px"></div>
<svg class="a" style="left:249px;top:191px" width="12" height="18" viewBox="0 0 12 18"><path d="M2.5 2.5 8.8 9 2.5 15.5" fill="none" stroke="#e6e6e6" stroke-width="1.6" stroke-linecap="round" stroke-linejoin="round"/></svg>
<div id="toolbar" class="a"></div>
<svg class="a" style="left:292px;top:126px" width="24" height="24" viewBox="0 0 24 24"><circle cx="8" cy="16.5" r="6.2" fill="none" stroke="#c9cacc" stroke-width="1.4"/><circle cx="11.5" cy="13" r="6.2" fill="#fff" stroke="#9a9b9d" stroke-width="1.4"/><circle cx="15.2" cy="9" r="6.2" fill="#fff" stroke="#2a2b2e" stroke-width="1.7"/></svg>
<div class="a" style="left:323px;top:131px;font-size:13.6px;font-weight:bold;color:#2b2c30">Animate</div>
<div id="canvasbg" class="a"></div>
<svg class="a" style="left:280px;top:385px" width="14" height="86" viewBox="0 0 14 86"><path d="M0 0H1Q1.5 6 6 10Q13 15 13 24V60Q13 69 6 74Q1.5 78 1 86H0Z" fill="#252627"/><path d="M7.8 43l-3.2 3.3 3.2 3.3" fill="none" stroke="#d8d8d8" stroke-width="1.3" stroke-linecap="round" stroke-linejoin="round"/></svg>
<div id="page" class="a"></div>
<svg class="a" style="left:462px;top:185px" width="96" height="382" viewBox="0 0 96 382"><rect x="0" y="0" width="22.5" height="382"/><rect x="73.3" y="0" width="22.7" height="382"/><rect x="22" y="6" width="52" height="6"/><rect x="22" y="77" width="52" height="8"/><rect x="22" y="151" width="52" height="8"/><rect x="22" y="225" width="52" height="8"/><rect x="22" y="298" width="52" height="8"/><rect x="22" y="371" width="52" height="5"/><g fill="#fff"><rect x="5" y="5.10" width="12.2" height="7.4" rx="1.6"/><rect x="78.6" y="5.10" width="12.2" height="7.4" rx="1.6"/><rect x="5" y="18.15" width="12.2" height="7.4" rx="1.6"/><rect x="78.6" y="18.15" width="12.2" height="7.4" rx="1.6"/><rect x="5" y="31.20" width="12.2" height="7.4" rx="1.6"/><rect x="78.6" y="31.20" width="12.2" height="7.4" rx="1.6"/><rect x="5" y="44.25" width="12.2" height="7.4" rx="1.6"/><rect x="78.6" y="44.25" width="12.2" height="7.4" rx="1.6"/><rect x="5" y="57.30" width="12.2" height="7.4" rx="1.6"/><rect x="78.6" y="57.30" width="12.2" height="7.4" rx="1.6"/><rect x="5" y="70.35" width="12.2" height="7.4" rx="1.6"/><rect x="78.6" y="70.35" width="12.2" height="7.4" rx="1.6"/><rect x="5" y="83.40" width="12.2" height="7.4" rx="1.6"/><rect x="78.6" y="83.40" width="12.2" height="7.4" rx="1.6"/><rect x="5" y="96.45" width="12.2" height="7.4" rx="1.6"/><rect x="78.6" y="96.45" width="12.2" height="7.4" rx="1.6"/><rect x="5" y="109.50" width="12.2" height="7.4" rx="1.6"/><rect x="78.6" y="109.50" width="12.2" height="7.4" rx="1.6"/><rect x="5" y="122.55" width="12.2" height="7.4" rx="1.6"/><rect x="78.6" y="122.55" width="12.2" height="7.4" rx="1.6"/><rect x="5" y="135.60" width="12.2" height="7.4" rx="1.6"/><rect x="78.6" y="135.60" width="12.2" height="7.4" rx="1.6"/><rect x="5" y="148.65" width="12.2" height="7.4" rx="1.6"/><rect x="78.6" y="148.65" width="12.2" height="7.4" rx="1.6"/><rect x="5" y="161.70" width="12.2" height="7.4" rx="1.6"/><rect x="78.6" y="161.70" width="12.2" height="7.4" rx="1.6"/><rect x="5" y="174.75" width="12.2" height="7.4" rx="1.6"/><rect x="78.6" y="174.75" width="12.2" height="7.4" rx="1.6"/><rect x="5" y="187.80" width="12.2" height="7.4" rx="1.6"/><rect x="78.6" y="187.80" width="12.2" height="7.4" rx="1.6"/><rect x="5" y="200.85" width="12.2" height="7.4" rx="1.6"/><rect x="78.6" y="200.85" width="12.2" height="7.4" rx="1.6"/><rect x="5" y="213.90" width="12.2" height="7.4" rx="1.6"/><rect x="78.6" y="213.90" width="12.2" height="7.4" rx="1.6"/><rect x="5" y="226.95" width="12.2" height="7.4" rx="1.6"/><rect x="78.6" y="226.95" width="12.2" height="7.4" rx="1.6"/><rect x="5" y="240.00" width="12.2" height="7.4" rx="1.6"/><rect x="78.6" y="240.00" width="12.2" height="7.4" rx="1.6"/><rect x="5" y="253.05" width="12.2" height="7.4" rx="1.6"/><rect x="78.6" y="253.05" width="12.2" height="7.4" rx="1.6"/><rect x="5" y="266.10" width="12.2" height="7.4" rx="1.6"/><rect x="78.6" y="266.10" width="12.2" height="7.4" rx="1.6"/><rect x="5" y="279.15" width="12.2" height="7.4" rx="1.6"/><rect x="78.6" y="279.15" width="12.2" height="7.4" rx="1.6"/><rect x="5" y="292.20" width="12.2" height="7.4" rx="1.6"/><rect x="78.6" y="292.20" width="12.2" height="7.4" rx="1.6"/><rect x="5" y="305.25" width="12.2" height="7.4" rx="1.6"/><rect x="78.6" y="305.25" width="12.2" height="7.4" rx="1.6"/><rect x="5" y="318.30" width="12.2" height="7.4" rx="1.6"/><rect x="78.6" y="318.30" width="12.2" height="7.4" rx="1.6"/><rect x="5" y="331.35" width="12.2" height="7.4" rx="1.6"/><rect x="78.6" y="331.35" width="12.2" height="7.4" rx="1.6"/><rect x="5" y="344.40" width="12.2" height="7.4" rx="1.6"/><rect x="78.6" y="344.40" width="12.2" height="7.4" rx="1.6"/><rect x="5" y="357.45" width="12.2" height="7.4" rx="1.6"/><rect x="78.6" y="357.45" width="12.2" height="7.4" rx="1.6"/><rect x="5" y="370.50" width="12.2" height="7.4" rx="1.6"/><rect x="78.6" y="370.50" width="12.2" height="7.4" rx="1.6"/></g></svg>
<svg class="a" style="left:560px;top:220px" width="208" height="320" viewBox="560 220 208 320">
<rect x="576" y="274" width="192" height="254" fill="#989898"/>
<g fill="#555"><circle cx="603" cy="306" r=".7"/><circle cx="707" cy="327" r="1"/><circle cx="673" cy="429" r="1"/><circle cx="593" cy="445" r=".7"/><circle cx="590" cy="477" r=".6"/></g>
<circle cx="807.5" cy="401.6" r="119.8" fill="none" stroke="#fff" stroke-width="3"/>
<circle cx="807.5" cy="401.6" r="108.5" fill="none" stroke="#fff" stroke-width="1.3"/>
<path d="M724.5 355.5 749.5 347.5h14V443.3H770V454.5H728.5V443.3H749.5V360L724.5 367Z" fill="#fff"/>
<rect x="576" y="400.6" width="192" height="2" fill="#151515"/>
<defs><g id="tt"><text x="580.8" y="264.6" font-family="Liberation Sans" font-weight="bold" font-size="42.5">A</text><text x="617.5" y="264.6" font-family="Liberation Sans" font-weight="bold" font-size="42.5">R</text><text transform="translate(653.8 264.6) scale(.74 1)" font-family="Liberation Sans" font-weight="bold" font-size="42.5">E</text><text x="698.8" y="264.6" font-family="Liberation Sans" font-weight="bold" font-size="42.5">Y</text><text x="734.5" y="264.6" font-family="Liberation Sans" font-weight="bold" font-size="42.5">O</text></g><mask id="mt" maskUnits="userSpaceOnUse" x="560" y="220" width="208" height="60"><use href="#tt" fill="#fff" stroke="#fff" stroke-width="1.6"/></mask></defs>
<use href="#tt" transform="translate(1 1.1)" fill="#222" stroke="#222" stroke-width="3.6" stroke-linejoin="round"/>
<use href="#tt" fill="#111" stroke="#111" stroke-width="3.6" stroke-linejoin="round"/>
<use href="#tt" fill="#f2f2f2" stroke="#f2f2f2" stroke-width="1.6"/>
<g mask="url(#mt)"><use href="#tt" transform="translate(1.1 1.1)" fill="#7a7a7a" stroke="#7a7a7a" stroke-width="1.6"/></g>
</svg>
<div id="tlbar" class="a"></div>
<svg class="a" style="left:286px;top:594px" width="7" height="9" viewBox="0 0 7 9"><path d="M6 0.8v7.4L1 4.5z" fill="#9b9da1"/></svg>
<div id="tl" class="a"></div>
<div class="a" style="left:300.5px;top:630px;width:54px;height:54px;border-radius:50%;background:#fff;box-shadow:0 1px 6px rgba(40,50,70,.18),0 0 1px rgba(0,0,0,.12)"></div>
<svg class="a" style="left:318px;top:646px" width="22" height="22" viewBox="0 0 22 22"><path d="M4.3 4.6c0-1.2 1-1.6 2-1L17 10c.9.6.9 1.5 0 2L6.3 18.4c-1 .6-2 .2-2-1z" fill="#0e1318"/></svg>
<svg class="a" style="left:366px;top:600px" width="22" height="16" viewBox="366 600 22 16"><path d="M372.6 605.4H381.4L377 611.6Z" fill="#0f1114" stroke="#0f1114" stroke-width="2.8" stroke-linejoin="round"/></svg>
<div class="a" style="left:378.5px;top:619.3px;width:230px;height:68px;border:1.6px solid #9ea1a6;border-radius:9px;background:#fff;overflow:hidden"></div>
<svg class="a" style="left:370px;top:615px" width="245" height="75" viewBox="370 615 245 75"><clipPath id="cb"><rect x="379.3" y="620.1" width="228.4" height="66.4" rx="8"/></clipPath><g clip-path="url(#cb)"><rect x="381" y="634.6" width="8.20" height="1.6" fill="#1e1e1e"/><rect x="381" y="646.5" width="8.20" height="1.6" fill="#1e1e1e"/><rect x="381" y="658.3000000000001" width="8.20" height="1.6" fill="#1e1e1e"/><rect x="381" y="670.2" width="8.20" height="1.6" fill="#1e1e1e"/><rect x="381" y="623.4" width="8.20" height="1" fill="#777"/><rect x="381" y="682.2" width="8.20" height="1" fill="#777"/><rect x="389.2" y="622.6" width="3.00" height="61.2" fill="#1a1a1a"/><rect x="389.80" y="623.60" width=".9" height=".9" fill="#ccc"/><rect x="390.50" y="623.60" width=".9" height=".9" fill="#ccc"/><rect x="389.80" y="625.60" width=".9" height=".9" fill="#ccc"/><rect x="390.50" y="625.60" width=".9" height=".9" fill="#ccc"/><rect x="389.80" y="627.60" width=".9" height=".9" fill="#ccc"/><rect x="390.50" y="627.60" width=".9" height=".9" fill="#ccc"/><rect x="389.80" y="629.60" width=".9" height=".9" fill="#ccc"/><rect x="390.50" y="629.60" width=".9" height=".9" fill="#ccc"/><rect x="389.80" y="631.60" width=".9" height=".9" fill="#ccc"/><rect x="390.50" y="631.60" width=".9" height=".9" fill="#ccc"/><rect x="389.80" y="633.60" width=".9" height=".9" fill="#ccc"/><rect x="390.50" y="633.60" width=".9" height=".9" fill="#ccc"/><rect x="389.80" y="635.60" width=".9" height=".9" fill="#ccc"/><rect x="390.50" y="635.60" width=".9" height=".9" fill="#ccc"/><rect x="389.80" y="637.60" width=".9" height=".9" fill="#ccc"/><rect x="390.50" y="637.60" width=".9" height=".9" fill="#ccc"/><rect x="389.80" y="639.60" width=".9" height=".9" fill="#ccc"/><rect x="390.50" y="639.60" width=".9" height=".9" fill="#ccc"/><rect x="389.80" y="641.60" width=".9" height=".9" fill="#ccc"/><rect x="390.50" y="641.60" width=".9" height=".9" fill="#ccc"/><rect x="389.80" y="643.60" width=".9" height=".9" fill="#ccc"/><rect x="390.50" y="643.60" width=".9" height=".9" fill="#ccc"/><rect x="389.80" y="645.60" width=".9" height=".9" fill="#ccc"/><rect x="390.50" y="645.60" width=".9" height=".9" fill="#ccc"/><rect x="389.80" y="647.60" width=".9" height=".9" fill="#ccc"/><rect x="390.50" y="647.60" width=".9" height=".9" fill="#ccc"/><rect x="389.80" y="649.60" width=".9" height=".9" fill="#ccc"/><rect x="390.50" y="649.60" width=".9" height=".9" fill="#ccc"/><rect x="389.80" y="651.60" width=".9" height=".9" fill="#ccc"/><rect x="390.50" y="651.60" width=".9" height=".9" fill="#ccc"/><rect x="389.80" y="653.60" width=".9" height=".9" fill="#ccc"/><rect x="390.50" y="653.60" width=".9" height=".9" fill="#ccc"/><rect x="389.80" y="655.60" width=".9" height=".9" fill="#ccc"/><rect x="390.50" y="655.60" width=".9" height=".9" fill="#ccc"/><rect x="389.80" y="657.60" width=".9" height=".9" fill="#ccc"/><rect x="390.50" y="657.60" width=".9" height=".9" fill="#ccc"/><rect x="389.80" y="659.60" width=".9" height=".9" fill="#ccc"/><rect x="390.50" y="659.60" width=".9" height=".9" fill="#ccc"/><rect x="389.80" y="661.60" width=".9" height=".9" fill="#ccc"/><rect x="390.50" y="661.60" width=".9" height=".9" fill="#ccc"/><rect x="389.80" y="663.60" width=".9" height=".9" fill="#ccc"/><rect x="390.50" y="663.60" width=".9" height=".9" fill="#ccc"/><rect x="389.80" y="665.60" width=".9" height=".9" fill="#ccc"/><rect x="390.50" y="665.60" width=".9" height=".9" fill="#ccc"/><rect x="389.80" y="667.60" width=".9" height=".9" fill="#ccc"/><rect x="390.50" y="667.60" width=".9" height=".9" fill="#ccc"/><rect x="389.80" y="669.60" width=".9" height=".9" fill="#ccc"/><rect x="390.50" y="669.60" width=".9" height=".9" fill="#ccc"/><rect x="389.80" y="671.60" width=".9" height=".9" fill="#ccc"/><rect x="390.50" y="671.60" width=".9" height=".9" fill="#ccc"/><rect x="389.80" y="673.60" width=".9" height=".9" fill="#ccc"/><rect x="390.50" y="673.60" width=".9" height=".9" fill="#ccc"/><rect x="389.80" y="675.60" width=".9" height=".9" fill="#ccc"/><rect x="390.50" y="675.60" width=".9" height=".9" fill="#ccc"/><rect x="389.80" y="677.60" width=".9" height=".9" fill="#ccc"/><rect x="390.50" y="677.60" width=".9" height=".9" fill="#ccc"/><rect x="389.80" y="679.60" width=".9" height=".9" fill="#ccc"/><rect x="390.50" y="679.60" width=".9" height=".9" fill="#ccc"/><rect x="389.80" y="681.60" width=".9" height=".9" fill="#ccc"/><rect x="390.50" y="681.60" width=".9" height=".9" fill="#ccc"/><text x="396.00" y="636.3" font-family="Liberation Sans" font-weight="bold" font-size="8.2" fill="#666" textLength="71.5" lengthAdjust="spacingAndGlyphs">ARE YOU READY?</text><rect x="395.4" y="637.2" width="72.8" height="40.2" fill="#9a9a9a"/><circle cx="431.80" cy="657.2" r="18.4" fill="none" stroke="#e8e8e8" stroke-width=".9"/><circle cx="431.80" cy="657.2" r="16.6" fill="none" stroke="#e8e8e8" stroke-width=".6"/><rect x="395.4" y="656.9" width="72.8" height=".7" fill="#555"/><rect x="431.45" y="637.2" width=".7" height="40.2" fill="#555"/><text x="431.80" y="665.9" text-anchor="middle" font-family="Liberation Sans" font-size="22.5" fill="#fff">8</text><circle cx="458.40" cy="672" r=".6" fill="#333"/><rect x="474.5" y="634.6" width="8.30" height="1.6" fill="#1e1e1e"/><rect x="474.5" y="646.5" width="8.30" height="1.6" fill="#1e1e1e"/><rect x="474.5" y="658.3000000000001" width="8.30" height="1.6" fill="#1e1e1e"/><rect x="474.5" y="670.2" width="8.30" height="1.6" fill="#1e1e1e"/><rect x="474.5" y="623.4" width="8.30" height="1" fill="#777"/><rect x="474.5" y="682.2" width="8.30" height="1" fill="#777"/><rect x="488.9" y="634.6" width="8.20" height="1.6" fill="#1e1e1e"/><rect x="488.9" y="646.5" width="8.20" height="1.6" fill="#1e1e1e"/><rect x="488.9" y="658.3000000000001" width="8.20" height="1.6" fill="#1e1e1e"/><rect x="488.9" y="670.2" width="8.20" height="1.6" fill="#1e1e1e"/><rect x="488.9" y="623.4" width="8.20" height="1" fill="#777"/><rect x="488.9" y="682.2" width="8.20" height="1" fill="#777"/><rect x="470.9" y="622.6" width="3.60" height="61.2" fill="#1a1a1a"/><rect x="471.50" y="623.60" width=".9" height=".9" fill="#ccc"/><rect x="472.80" y="623.60" width=".9" height=".9" fill="#ccc"/><rect x="471.50" y="625.60" width=".9" height=".9" fill="#ccc"/><rect x="472.80" y="625.60" width=".9" height=".9" fill="#ccc"/><rect x="471.50" y="627.60" width=".9" height=".9" fill="#ccc"/><rect x="472.80" y="627.60" width=".9" height=".9" fill="#ccc"/><rect x="471.50" y="629.60" width=".9" height=".9" fill="#ccc"/><rect x="472.80" y="629.60" width=".9" height=".9" fill="#ccc"/><rect x="471.50" y="631.60" width=".9" height=".9" fill="#ccc"/><rect x="472.80" y="631.60" width=".9" height=".9" fill="#ccc"/><rect x="471.50" y="633.60" width=".9" height=".9" fill="#ccc"/><rect x="472.80" y="633.60" width=".9" height=".9" fill="#ccc"/><rect x="471.50" y="635.60" width=".9" height=".9" fill="#ccc"/><rect x="472.80" y="635.60" width=".9" height=".9" fill="#ccc"/><rect x="471.50" y="637.60" width=".9" height=".9" fill="#ccc"/><rect x="472.80" y="637.60" width=".9" height=".9" fill="#ccc"/><rect x="471.50" y="639.60" width=".9" height=".9" fill="#ccc"/><rect x="472.80" y="639.60" width=".9" height=".9" fill="#ccc"/><rect x="471.50" y="641.60" width=".9" height=".9" fill="#ccc"/><rect x="472.80" y="641.60" width=".9" height=".9" fill="#ccc"/><rect x="471.50" y="643.60" width=".9" height=".9" fill="#ccc"/><rect x="472.80" y="643.60" width=".9" height=".9" fill="#ccc"/><rect x="471.50" y="645.60" width=".9" height=".9" fill="#ccc"/><rect x="472.80" y="645.60" width=".9" height=".9" fill="#ccc"/><rect x="471.50" y="647.60" width=".9" height=".9" fill="#ccc"/><rect x="472.80" y="647.60" width=".9" height=".9" fill="#ccc"/><rect x="471.50" y="649.60" width=".9" height=".9" fill="#ccc"/><rect x="472.80" y="649.60" width=".9" height=".9" fill="#ccc"/><rect x="471.50" y="651.60" width=".9" height=".9" fill="#ccc"/><rect x="472.80" y="651.60" width=".9" height=".9" fill="#ccc"/><rect x="471.50" y="653.60" width=".9" height=".9" fill="#ccc"/><rect x="472.80" y="653.60" width=".9" height=".9" fill="#ccc"/><rect x="471.50" y="655.60" width=".9" height=".9" fill="#ccc"/><rect x="472.80" y="655.60" width=".9" height=".9" fill="#ccc"/><rect x="471.50" y="657.60" width=".9" height=".9" fill="#ccc"/><rect x="472.80" y="657.60" width=".9" height=".9" fill="#ccc"/><rect x="471.50" y="659.60" width=".9" height=".9" fill="#ccc"/><rect x="472.80" y="659.60" width=".9" height=".9" fill="#ccc"/><rect x="471.50" y="661.60" width=".9" height=".9" fill="#ccc"/><rect x="472.80" y="661.60" width=".9" height=".9" fill="#ccc"/><rect x="471.50" y="663.60" width=".9" height=".9" fill="#ccc"/><rect x="472.80" y="663.60" width=".9" height=".9" fill="#ccc"/><rect x="471.50" y="665.60" width=".9" height=".9" fill="#ccc"/><rect x="472.80" y="665.60" width=".9" height=".9" fill="#ccc"/><rect x="471.50" y="667.60" width=".9" height=".9" fill="#ccc"/><rect x="472.80" y="667.60" width=".9" height=".9" fill="#ccc"/><rect x="471.50" y="669.60" width=".9" height=".9" fill="#ccc"/><rect x="472.80" y="669.60" width=".9" height=".9" fill="#ccc"/><rect x="471.50" y="671.60" width=".9" height=".9" fill="#ccc"/><rect x="472.80" y="671.60" width=".9" height=".9" fill="#ccc"/><rect x="471.50" y="673.60" width=".9" height=".9" fill="#ccc"/><rect x="472.80" y="673.60" width=".9" height=".9" fill="#ccc"/><rect x="471.50" y="675.60" width=".9" height=".9" fill="#ccc"/><rect x="472.80" y="675.60" width=".9" height=".9" fill="#ccc"/><rect x="471.50" y="677.60" width=".9" height=".9" fill="#ccc"/><rect x="472.80" y="677.60" width=".9" height=".9" fill="#ccc"/><rect x="471.50" y="679.60" width=".9" height=".9" fill="#ccc"/><rect x="472.80" y="679.60" width=".9" height=".9" fill="#ccc"/><rect x="471.50" y="681.60" width=".9" height=".9" fill="#ccc"/><rect x="472.80" y="681.60" width=".9" height=".9" fill="#ccc"/><rect x="482.8" y="622.6" width="6.10" height="61.2" fill="#1a1a1a"/><rect x="483.80" y="623.60" width=".9" height=".9" fill="#ccc"/><rect x="486.80" y="623.60" width=".9" height=".9" fill="#ccc"/><rect x="483.80" y="625.60" width=".9" height=".9" fill="#ccc"/><rect x="486.80" y="625.60" width=".9" height=".9" fill="#ccc"/><rect x="483.80" y="627.60" width=".9" height=".9" fill="#ccc"/><rect x="486.80" y="627.60" width=".9" height=".9" fill="#ccc"/><rect x="483.80" y="629.60" width=".9" height=".9" fill="#ccc"/><rect x="486.80" y="629.60" width=".9" height=".9" fill="#ccc"/><rect x="483.80" y="631.60" width=".9" height=".9" fill="#ccc"/><rect x="486.80" y="631.60" width=".9" height=".9" fill="#ccc"/><rect x="483.80" y="633.60" width=".9" height=".9" fill="#ccc"/><rect x="486.80" y="633.60" width=".9" height=".9" fill="#ccc"/><rect x="483.80" y="635.60" width=".9" height=".9" fill="#ccc"/><rect x="486.80" y="635.60" width=".9" height=".9" fill="#ccc"/><rect x="483.80" y="637.60" width=".9" height=".9" fill="#ccc"/><rect x="486.80" y="637.60" width=".9" height=".9" fill="#ccc"/><rect x="483.80" y="639.60" width=".9" height=".9" fill="#ccc"/><rect x="486.80" y="639.60" width=".9" height=".9" fill="#ccc"/><rect x="483.80" y="641.60" width=".9" height=".9" fill="#ccc"/><rect x="486.80" y="641.60" width=".9" height=".9" fill="#ccc"/><rect x="483.80" y="643.60" width=".9" height=".9" fill="#ccc"/><rect x="486.80" y="643.60" width=".9" height=".9" fill="#ccc"/><rect x="483.80" y="645.60" width=".9" height=".9" fill="#ccc"/><rect x="486.80" y="645.60" width=".9" height=".9" fill="#ccc"/><rect x="483.80" y="647.60" width=".9" height=".9" fill="#ccc"/><rect x="486.80" y="647.60" width=".9" height=".9" fill="#ccc"/><rect x="483.80" y="649.60" width=".9" height=".9" fill="#ccc"/><rect x="486.80" y="649.60" width=".9" height=".9" fill="#ccc"/><rect x="483.80" y="651.60" width=".9" height=".9" fill="#ccc"/><rect x="486.80" y="651.60" width=".9" height=".9" fill="#ccc"/><rect x="483.80" y="653.60" width=".9" height=".9" fill="#ccc"/><rect x="486.80" y="653.60" width=".9" height=".9" fill="#ccc"/><rect x="483.80" y="655.60" width=".9" height=".9" fill="#ccc"/><rect x="486.80" y="655.60" width=".9" height=".9" fill="#ccc"/><rect x="483.80" y="657.60" width=".9" height=".9" fill="#ccc"/><rect x="486.80" y="657.60" width=".9" height=".9" fill="#ccc"/><rect x="483.80" y="659.60" width=".9" height=".9" fill="#ccc"/><rect x="486.80" y="659.60" width=".9" height=".9" fill="#ccc"/><rect x="483.80" y="661.60" width=".9" height=".9" fill="#ccc"/><rect x="486.80" y="661.60" width=".9" height=".9" fill="#ccc"/><rect x="483.80" y="663.60" width=".9" height=".9" fill="#ccc"/><rect x="486.80" y="663.60" width=".9" height=".9" fill="#ccc"/><rect x="483.80" y="665.60" width=".9" height=".9" fill="#ccc"/><rect x="486.80" y="665.60" width=".9" height=".9" fill="#ccc"/><rect x="483.80" y="667.60" width=".9" height=".9" fill="#ccc"/><rect x="486.80" y="667.60" width=".9" height=".9" fill="#ccc"/><rect x="483.80" y="669.60" width=".9" height=".9" fill="#ccc"/><rect x="486.80" y="669.60" width=".9" height=".9" fill="#ccc"/><rect x="483.80" y="671.60" width=".9" height=".9" fill="#ccc"/><rect x="486.80" y="671.60" width=".9" height=".9" fill="#ccc"/><rect x="483.80" y="673.60" width=".9" height=".9" fill="#ccc"/><rect x="486.80" y="673.60" width=".9" height=".9" fill="#ccc"/><rect x="483.80" y="675.60" width=".9" height=".9" fill="#ccc"/><rect x="486.80" y="675.60" width=".9" height=".9" fill="#ccc"/><rect x="483.80" y="677.60" width=".9" height=".9" fill="#ccc"/><rect x="486.80" y="677.60" width=".9" height=".9" fill="#ccc"/><rect x="483.80" y="679.60" width=".9" height=".9" fill="#ccc"/><rect x="486.80" y="679.60" width=".9" height=".9" fill="#ccc"/><rect x="483.80" y="681.60" width=".9" height=".9" fill="#ccc"/><rect x="486.80" y="681.60" width=".9" height=".9" fill="#ccc"/><rect x="497.1" y="622.6" width="3.40" height="61.2" fill="#1a1a1a"/><rect x="497.70" y="623.60" width=".9" height=".9" fill="#ccc"/><rect x="498.80" y="623.60" width=".9" height=".9" fill="#ccc"/><rect x="497.70" y="625.60" width=".9" height=".9" fill="#ccc"/><rect x="498.80" y="625.60" width=".9" height=".9" fill="#ccc"/><rect x="497.70" y="627.60" width=".9" height=".9" fill="#ccc"/><rect x="498.80" y="627.60" width=".9" height=".9" fill="#ccc"/><rect x="497.70" y="629.60" width=".9" height=".9" fill="#ccc"/><rect x="498.80" y="629.60" width=".9" height=".9" fill="#ccc"/><rect x="497.70" y="631.60" width=".9" height=".9" fill="#ccc"/><rect x="498.80" y="631.60" width=".9" height=".9" fill="#ccc"/><rect x="497.70" y="633.60" width=".9" height=".9" fill="#ccc"/><rect x="498.80" y="633.60" width=".9" height=".9" fill="#ccc"/><rect x="497.70" y="635.60" width=".9" height=".9" fill="#ccc"/><rect x="498.80" y="635.60" width=".9" height=".9" fill="#ccc"/><rect x="497.70" y="637.60" width=".9" height=".9" fill="#ccc"/><rect x="498.80" y="637.60" width=".9" height=".9" fill="#ccc"/><rect x="497.70" y="639.60" width=".9" height=".9" fill="#ccc"/><rect x="498.80" y="639.60" width=".9" height=".9" fill="#ccc"/><rect x="497.70" y="641.60" width=".9" height=".9" fill="#ccc"/><rect x="498.80" y="641.60" width=".9" height=".9" fill="#ccc"/><rect x="497.70" y="643.60" width=".9" height=".9" fill="#ccc"/><rect x="498.80" y="643.60" width=".9" height=".9" fill="#ccc"/><rect x="497.70" y="645.60" width=".9" height=".9" fill="#ccc"/><rect x="498.80" y="645.60" width=".9" height=".9" fill="#ccc"/><rect x="497.70" y="647.60" width=".9" height=".9" fill="#ccc"/><rect x="498.80" y="647.60" width=".9" height=".9" fill="#ccc"/><rect x="497.70" y="649.60" width=".9" height=".9" fill="#ccc"/><rect x="498.80" y="649.60" width=".9" height=".9" fill="#ccc"/><rect x="497.70" y="651.60" width=".9" height=".9" fill="#ccc"/><rect x="498.80" y="651.60" width=".9" height=".9" fill="#ccc"/><rect x="497.70" y="653.60" width=".9" height=".9" fill="#ccc"/><rect x="498.80" y="653.60" width=".9" height=".9" fill="#ccc"/><rect x="497.70" y="655.60" width=".9" height=".9" fill="#ccc"/><rect x="498.80" y="655.60" width=".9" height=".9" fill="#ccc"/><rect x="497.70" y="657.60" width=".9" height=".9" fill="#ccc"/><rect x="498.80" y="657.60" width=".9" height=".9" fill="#ccc"/><rect x="497.70" y="659.60" width=".9" height=".9" fill="#ccc"/><rect x="498.80" y="659.60" width=".9" height=".9" fill="#ccc"/><rect x="497.70" y="661.60" width=".9" height=".9" fill="#ccc"/><rect x="498.80" y="661.60" width=".9" height=".9" fill="#ccc"/><rect x="497.70" y="663.60" width=".9" height=".9" fill="#ccc"/><rect x="498.80" y="663.60" width=".9" height=".9" fill="#ccc"/><rect x="497.70" y="665.60" width=".9" height=".9" fill="#ccc"/><rect x="498.80" y="665.60" width=".9" height=".9" fill="#ccc"/><rect x="497.70" y="667.60" width=".9" height=".9" fill="#ccc"/><rect x="498.80" y="667.60" width=".9" height=".9" fill="#ccc"/><rect x="497.70" y="669.60" width=".9" height=".9" fill="#ccc"/><rect x="498.80" y="669.60" width=".9" height=".9" fill="#ccc"/><rect x="497.70" y="671.60" width=".9" height=".9" fill="#ccc"/><rect x="498.80" y="671.60" width=".9" height=".9" fill="#ccc"/><rect x="497.70" y="673.60" width=".9" height=".9" fill="#ccc"/><rect x="498.80" y="673.60" width=".9" height=".9" fill="#ccc"/><rect x="497.70" y="675.60" width=".9" height=".9" fill="#ccc"/><rect x="498.80" y="675.60" width=".9" height=".9" fill="#ccc"/><rect x="497.70" y="677.60" width=".9" height=".9" fill="#ccc"/><rect x="498.80" y="677.60" width=".9" height=".9" fill="#ccc"/><rect x="497.70" y="679.60" width=".9" height=".9" fill="#ccc"/><rect x="498.80" y="679.60" width=".9" height=".9" fill="#ccc"/><rect x="497.70" y="681.60" width=".9" height=".9" fill="#ccc"/><rect x="498.80" y="681.60" width=".9" height=".9" fill="#ccc"/><text x="503.90" y="636.3" font-family="Liberation Sans" font-weight="bold" font-size="8.2" fill="#666" textLength="71.5" lengthAdjust="spacingAndGlyphs">ARE YOU READY?</text><rect x="503.3" y="637.2" width="72.8" height="40.2" fill="#9a9a9a"/><circle cx="539.70" cy="657.2" r="18.4" fill="none" stroke="#e8e8e8" stroke-width=".9"/><circle cx="539.70" cy="657.2" r="16.6" fill="none" stroke="#e8e8e8" stroke-width=".6"/><rect x="503.3" y="656.9" width="72.8" height=".7" fill="#555"/><rect x="539.35" y="637.2" width=".7" height="40.2" fill="#555"/><text x="539.70" y="665.9" text-anchor="middle" font-family="Liberation Sans" font-size="22.5" fill="#fff">3</text><circle cx="566.30" cy="672" r=".6" fill="#333"/><rect x="582.6" y="634.6" width="8.10" height="1.6" fill="#1e1e1e"/><rect x="582.6" y="646.5" width="8.10" height="1.6" fill="#1e1e1e"/><rect x="582.6" y="658.3000000000001" width="8.10" height="1.6" fill="#1e1e1e"/><rect x="582.6" y="670.2" width="8.10" height="1.6" fill="#1e1e1e"/><rect x="582.6" y="623.4" width="8.10" height="1" fill="#777"/><rect x="582.6" y="682.2" width="8.10" height="1" fill="#777"/><rect x="597.8" y="634.6" width="7.20" height="1.6" fill="#1e1e1e"/><rect x="597.8" y="646.5" width="7.20" height="1.6" fill="#1e1e1e"/><rect x="597.8" y="658.3000000000001" width="7.20" height="1.6" fill="#1e1e1e"/><rect x="597.8" y="670.2" width="7.20" height="1.6" fill="#1e1e1e"/><rect x="597.8" y="623.4" width="7.20" height="1" fill="#777"/><rect x="597.8" y="682.2" width="7.20" height="1" fill="#777"/><rect x="579.1" y="622.6" width="3.50" height="61.2" fill="#1a1a1a"/><rect x="579.70" y="623.60" width=".9" height=".9" fill="#ccc"/><rect x="580.90" y="623.60" width=".9" height=".9" fill="#ccc"/><rect x="579.70" y="625.60" width=".9" height=".9" fill="#ccc"/><rect x="580.90" y="625.60" width=".9" height=".9" fill="#ccc"/><rect x="579.70" y="627.60" width=".9" height=".9" fill="#ccc"/><rect x="580.90" y="627.60" width=".9" height=".9" fill="#ccc"/><rect x="579.70" y="629.60" width=".9" height=".9" fill="#ccc"/><rect x="580.90" y="629.60" width=".9" height=".9" fill="#ccc"/><rect x="579.70" y="631.60" width=".9" height=".9" fill="#ccc"/><rect x="580.90" y="631.60" width=".9" height=".9" fill="#ccc"/><rect x="579.70" y="633.60" width=".9" height=".9" fill="#ccc"/><rect x="580.90" y="633.60" width=".9" height=".9" fill="#ccc"/><rect x="579.70" y="635.60" width=".9" height=".9" fill="#ccc"/><rect x="580.90" y="635.60" width=".9" height=".9" fill="#ccc"/><rect x="579.70" y="637.60" width=".9" height=".9" fill="#ccc"/><rect x="580.90" y="637.60" width=".9" height=".9" fill="#ccc"/><rect x="579.70" y="639.60" width=".9" height=".9" fill="#ccc"/><rect x="580.90" y="639.60" width=".9" height=".9" fill="#ccc"/><rect x="579.70" y="641.60" width=".9" height=".9" fill="#ccc"/><rect x="580.90" y="641.60" width=".9" height=".9" fill="#ccc"/><rect x="579.70" y="643.60" width=".9" height=".9" fill="#ccc"/><rect x="580.90" y="643.60" width=".9" height=".9" fill="#ccc"/><rect x="579.70" y="645.60" width=".9" height=".9" fill="#ccc"/><rect x="580.90" y="645.60" width=".9" height=".9" fill="#ccc"/><rect x="579.70" y="647.60" width=".9" height=".9" fill="#ccc"/><rect x="580.90" y="647.60" width=".9" height=".9" fill="#ccc"/><rect x="579.70" y="649.60" width=".9" height=".9" fill="#ccc"/><rect x="580.90" y="649.60" width=".9" height=".9" fill="#ccc"/><rect x="579.70" y="651.60" width=".9" height=".9" fill="#ccc"/><rect x="580.90" y="651.60" width=".9" height=".9" fill="#ccc"/><rect x="579.70" y="653.60" width=".9" height=".9" fill="#ccc"/><rect x="580.90" y="653.60" width=".9" height=".9" fill="#ccc"/><rect x="579.70" y="655.60" width=".9" height=".9" fill="#ccc"/><rect x="580.90" y="655.60" width=".9" height=".9" fill="#ccc"/><rect x="579.70" y="657.60" width=".9" height=".9" fill="#ccc"/><rect x="580.90" y="657.60" width=".9" height=".9" fill="#ccc"/><rect x="579.70" y="659.60" width=".9" height=".9" fill="#ccc"/><rect x="580.90" y="659.60" width=".9" height=".9" fill="#ccc"/><rect x="579.70" y="661.60" width=".9" height=".9" fill="#ccc"/><rect x="580.90" y="661.60" width=".9" height=".9" fill="#ccc"/><rect x="579.70" y="663.60" width=".9" height=".9" fill="#ccc"/><rect x="580.90" y="663.60" width=".9" height=".9" fill="#ccc"/><rect x="579.70" y="665.60" width=".9" height=".9" fill="#ccc"/><rect x="580.90" y="665.60" width=".9" height=".9" fill="#ccc"/><rect x="579.70" y="667.60" width=".9" height=".9" fill="#ccc"/><rect x="580.90" y="667.60" width=".9" height=".9" fill="#ccc"/><rect x="579.70" y="669.60" width=".9" height=".9" fill="#ccc"/><rect x="580.90" y="669.60" width=".9" height=".9" fill="#ccc"/><rect x="579.70" y="671.60" width=".9" height=".9" fill="#ccc"/><rect x="580.90" y="671.60" width=".9" height=".9" fill="#ccc"/><rect x="579.70" y="673.60" width=".9" height=".9" fill="#ccc"/><rect x="580.90" y="673.60" width=".9" height=".9" fill="#ccc"/><rect x="579.70" y="675.60" width=".9" height=".9" fill="#ccc"/><rect x="580.90" y="675.60" width=".9" height=".9" fill="#ccc"/><rect x="579.70" y="677.60" width=".9" height=".9" fill="#ccc"/><rect x="580.90" y="677.60" width=".9" height=".9" fill="#ccc"/><rect x="579.70" y="679.60" width=".9" height=".9" fill="#ccc"/><rect x="580.90" y="679.60" width=".9" height=".9" fill="#ccc"/><rect x="579.70" y="681.60" width=".9" height=".9" fill="#ccc"/><rect x="580.90" y="681.60" width=".9" height=".9" fill="#ccc"/><rect x="590.7" y="622.6" width="7.10" height="61.2" fill="#1a1a1a"/><rect x="591.70" y="623.60" width=".9" height=".9" fill="#ccc"/><rect x="595.70" y="623.60" width=".9" height=".9" fill="#ccc"/><rect x="591.70" y="625.60" width=".9" height=".9" fill="#ccc"/><rect x="595.70" y="625.60" width=".9" height=".9" fill="#ccc"/><rect x="591.70" y="627.60" width=".9" height=".9" fill="#ccc"/><rect x="595.70" y="627.60" width=".9" height=".9" fill="#ccc"/><rect x="591.70" y="629.60" width=".9" height=".9" fill="#ccc"/><rect x="595.70" y="629.60" width=".9" height=".9" fill="#ccc"/><rect x="591.70" y="631.60" width=".9" height=".9" fill="#ccc"/><rect x="595.70" y="631.60" width=".9" height=".9" fill="#ccc"/><rect x="591.70" y="633.60" width=".9" height=".9" fill="#ccc"/><rect x="595.70" y="633.60" width=".9" height=".9" fill="#ccc"/><rect x="591.70" y="635.60" width=".9" height=".9" fill="#ccc"/><rect x="595.70" y="635.60" width=".9" height=".9" fill="#ccc"/><rect x="591.70" y="637.60" width=".9" height=".9" fill="#ccc"/><rect x="595.70" y="637.60" width=".9" height=".9" fill="#ccc"/><rect x="591.70" y="639.60" width=".9" height=".9" fill="#ccc"/><rect x="595.70" y="639.60" width=".9" height=".9" fill="#ccc"/><rect x="591.70" y="641.60" width=".9" height=".9" fill="#ccc"/><rect x="595.70" y="641.60" width=".9" height=".9" fill="#ccc"/><rect x="591.70" y="643.60" width=".9" height=".9" fill="#ccc"/><rect x="595.70" y="643.60" width=".9" height=".9" fill="#ccc"/><rect x="591.70" y="645.60" width=".9" height=".9" fill="#ccc"/><rect x="595.70" y="645.60" width=".9" height=".9" fill="#ccc"/><rect x="591.70" y="647.60" width=".9" height=".9" fill="#ccc"/><rect x="595.70" y="647.60" width=".9" height=".9" fill="#ccc"/><rect x="591.70" y="649.60" width=".9" height=".9" fill="#ccc"/><rect x="595.70" y="649.60" width=".9" height=".9" fill="#ccc"/><rect x="591.70" y="651.60" width=".9" height=".9" fill="#ccc"/><rect x="595.70" y="651.60" width=".9" height=".9" fill="#ccc"/><rect x="591.70" y="653.60" width=".9" height=".9" fill="#ccc"/><rect x="595.70" y="653.60" width=".9" height=".9" fill="#ccc"/><rect x="591.70" y="655.60" width=".9" height=".9" fill="#ccc"/><rect x="595.70" y="655.60" width=".9" height=".9" fill="#ccc"/><rect x="591.70" y="657.60" width=".9" height=".9" fill="#ccc"/><rect x="595.70" y="657.60" width=".9" height=".9" fill="#ccc"/><rect x="591.70" y="659.60" width=".9" height=".9" fill="#ccc"/><rect x="595.70" y="659.60" width=".9" height=".9" fill="#ccc"/><rect x="591.70" y="661.60" width=".9" height=".9" fill="#ccc"/><rect x="595.70" y="661.60" width=".9" height=".9" fill="#ccc"/><rect x="591.70" y="663.60" width=".9" height=".9" fill="#ccc"/><rect x="595.70" y="663.60" width=".9" height=".9" fill="#ccc"/><rect x="591.70" y="665.60" width=".9" height=".9" fill="#ccc"/><rect x="595.70" y="665.60" width=".9" height=".9" fill="#ccc"/><rect x="591.70" y="667.60" width=".9" height=".9" fill="#ccc"/><rect x="595.70" y="667.60" width=".9" height=".9" fill="#ccc"/><rect x="591.70" y="669.60" width=".9" height=".9" fill="#ccc"/><rect x="595.70" y="669.60" width=".9" height=".9" fill="#ccc"/><rect x="591.70" y="671.60" width=".9" height=".9" fill="#ccc"/><rect x="595.70" y="671.60" width=".9" height=".9" fill="#ccc"/><rect x="591.70" y="673.60" width=".9" height=".9" fill="#ccc"/><rect x="595.70" y="673.60" width=".9" height=".9" fill="#ccc"/><rect x="591.70" y="675.60" width=".9" height=".9" fill="#ccc"/><rect x="595.70" y="675.60" width=".9" height=".9" fill="#ccc"/><rect x="591.70" y="677.60" width=".9" height=".9" fill="#ccc"/><rect x="595.70" y="677.60" width=".9" height=".9" fill="#ccc"/><rect x="591.70" y="679.60" width=".9" height=".9" fill="#ccc"/><rect x="595.70" y="679.60" width=".9" height=".9" fill="#ccc"/><rect x="591.70" y="681.60" width=".9" height=".9" fill="#ccc"/><rect x="595.70" y="681.60" width=".9" height=".9" fill="#ccc"/></g></svg><div class="a" style="left:385px;top:665.3px;width:39px;height:14.5px;border-radius:7.2px;background:rgba(62,65,70,.92);color:#fff;font-size:11.3px;font-weight:bold;line-height:14.5px;text-align:center;letter-spacing:.1px">10.0s</div>

<div class="a" style="left:376px;top:622.5px;width:2.2px;height:61.5px;background:#3c3e42;border-radius:1px"></div>
<div class="a" style="left:620.5px;top:622.5px;width:92px;height:61px;border-radius:7px;background:#eceef1"></div>
<svg class="a" style="left:658px;top:645px" width="17" height="17" viewBox="0 0 17 17"><path d="M8.5 1.5v14M1.5 8.5h14" stroke="#111" stroke-width="1.5"/></svg>
<!--AR-->
<svg class="a" style="left:0;top:0" width="768" height="100" viewBox="0 0 768 100"><defs><filter id="ash" x="-20%" y="-20%" width="140%" height="140%"><feDropShadow dx=".6" dy=".8" stdDeviation=".7" flood-color="#300" flood-opacity=".45"/></filter></defs>
<g fill="#f40000" stroke="#f40000" stroke-width="1.4" stroke-linejoin="round" filter="url(#ash)">
<path d="M38.5 29.8L16.5 37.2Q14.2 38.5 15.6 40.3Q16.6 41.1 18.5 40.8L22.8 40.3L5.4 66.6L30.2 46.6L30.4 52.3Q31 54.2 32.7 53.6Q33.6 53 34 51.5Z"/>
<path d="M240.6 28.6L233.2 43.6Q232.6 45.6 234.2 46Q235.4 46.2 236.5 45L238.3 44.6L242.6 67.6L245.4 44.6L248 45.6Q249.8 46.6 250.6 45.2Q251 44.2 250.2 43.2Z"/>
<path d="M416.8 26.6L430.2 44.4Q431.4 46.6 433.2 45.8Q434.2 45 433.8 43.2L432.8 40.8L509 74.2L437.6 31.2L440.4 30.2Q442.4 29.4 442 27.8Q441.4 26.8 439.6 26.8Z"/>
</g></svg>
<!--/AR-->
</body></html>
